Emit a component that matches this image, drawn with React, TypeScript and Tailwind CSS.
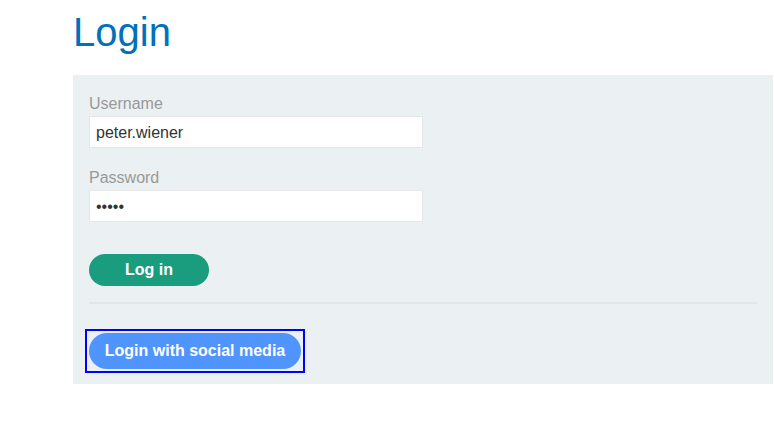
import { useState } from 'react'

export default function App() {
  const [username, setUsername] = useState('peter.wiener')
  const [password, setPassword] = useState('peter')

  return (
    <div className="min-h-[431px] bg-white font-['Liberation_Sans',Arial,sans-serif]">
      <div className="ml-[73px] w-[700px] pt-[9px]">
        <h1 className="text-[40px] leading-[46px] text-[#0071bc] mb-[20px]">Login</h1>

        <div className="bg-[#ebf0f2] px-4 pt-[19px] pb-[11px]">
          <form onSubmit={e => e.preventDefault()}>
            <label className="block text-base leading-5 text-[#999] mb-[2px]">Username</label>
            <input
              type="text"
              value={username}
              onChange={e => setUsername(e.target.value)}
              className="block w-[334px] h-8 bg-white border border-[#e6e6e6] px-[6px] pt-[2px] text-base text-[#333] outline-none"
            />

            <label className="block text-base leading-5 text-[#999] mt-[20px] mb-[2px]">Password</label>
            <input
              type="password"
              value={password}
              onChange={e => setPassword(e.target.value)}
              className="block w-[334px] h-8 bg-white border border-[#e6e6e6] px-[6px] pt-[2px] text-base text-[#333] outline-none"
            />

            <button
              type="submit"
              className="mt-8 w-[120px] h-8 rounded-full bg-[#1a9c7f] text-white font-bold text-base"
            >
              Log in
            </button>
          </form>

          <div className="mt-4 h-[2px] bg-[#e3e6e6]" />

          {/* focus ring drawn as a square frame, like the browser default */}
          <div className="mt-[25px] -ml-1 w-fit border-2 border-[#0000ff] p-[2px]">
            <button
              type="button"
              className="block h-9 w-[212px] rounded-full bg-[#5094fd] text-white font-bold text-base outline-none"
            >
              Login with social media
            </button>
          </div>
        </div>
      </div>
    </div>
  )
}
